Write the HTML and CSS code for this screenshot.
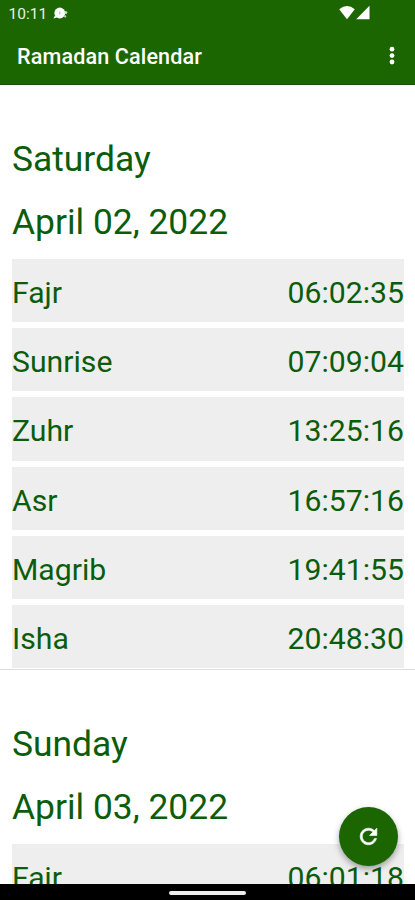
FILE: index.html
```html
<!DOCTYPE html>
<html lang="en">
<head>
<meta charset="utf-8">
<title>Ramadan Calendar</title>
<link rel="stylesheet" href="styles.css">
</head>
<body>
<div class="screen">
  <header class="header">
    <div class="status">
      <span class="clock">10:11</span>
      <svg class="notice" width="16" height="14" viewBox="0 0 16 14"><circle cx="6.8" cy="6" r="5.4" fill="#fff"/><path d="M.4 11.6l1.6-3 2 2z" fill="#fff"/><circle cx="12.8" cy="5.6" r="1.5" fill="#c8dcc2"/><circle cx="12.2" cy="9.4" r="1.1" fill="#c8dcc2"/><path d="M6.8 4.4v3" stroke="#a9c4a0" stroke-width="1.2"/></svg>
      <svg class="signal" width="32" height="16" viewBox="0 0 32 16"><path d="M.2 4.2Q8 -2.2 15.8 4.2L8 14.2z" fill="#fff"/><path d="M30.5 .8V14.2H17.2z" fill="#fff"/></svg>
    </div>
    <div class="toolbar">
      <h1 class="title">Ramadan Calendar</h1>
      <svg class="more" width="6" height="20" viewBox="0 0 6 20"><g fill="#fff"><circle cx="3" cy="3.2" r="2.4"/><circle cx="3" cy="9.6" r="2.4"/><circle cx="3" cy="16" r="2.4"/></g></svg>
    </div>
  </header>
  <main class="list">
    <section class="day">
      <h2 class="heading">Saturday</h2>
      <p class="heading">April 02, 2022</p>
      <ul class="times">
        <li class="row"><span>Fajr</span><span>06:02:35</span></li>
        <li class="row"><span>Sunrise</span><span>07:09:04</span></li>
        <li class="row"><span>Zuhr</span><span>13:25:16</span></li>
        <li class="row"><span>Asr</span><span>16:57:16</span></li>
        <li class="row"><span>Magrib</span><span>19:41:55</span></li>
        <li class="row"><span>Isha</span><span>20:48:30</span></li>
      </ul>
    </section>
    <section class="day">
      <h2 class="heading">Sunday</h2>
      <p class="heading">April 03, 2022</p>
      <ul class="times">
        <li class="row"><span>Fajr</span><span>06:01:18</span></li>
      </ul>
    </section>
  </main>
  <button class="fab" aria-label="Refresh"><svg width="25" height="25" viewBox="0 0 24 24"><path d="M17.65 6.35A7.96 7.96 0 0 0 12 4a8 8 0 1 0 7.73 10h-2.08A6 6 0 1 1 12 6c1.66 0 3.14.69 4.22 1.78L13 11h7V4z" fill="#fff" stroke="#fff" stroke-width=".6"/></svg></button>
  <footer class="nav"><span class="handle"></span></footer>
</div>
</body>
</html>
```

FILE: styles.css
```css
* { box-sizing: border-box; margin: 0; padding: 0; }
body { font-family: Roboto, sans-serif; background: #fff; }
.screen {
  position: relative;
  width: 415px;
  height: 900px;
  display: flex;
  flex-direction: column;
  overflow: hidden;
}
.header {
  flex: none;
  height: 85px;
  background: #1b6600;
  border-bottom: 1px solid #14510a;
  color: #fff;
}
.status { display: flex; align-items: center; height: 28px; padding: 0 44px 0 8.5px; }
.clock { font-size: 15.5px; line-height: 28px; color: #e8f0e5; }
.notice { margin-left: 6px; }
.signal { margin: 0 0 2px auto; }
.toolbar {
  display: flex;
  align-items: center;
  justify-content: space-between;
  height: 56px;
  padding: 0 20px 0 17px;
}
.title { padding-top: 2px; font-size: 21.6px; font-weight: 550; letter-spacing: .12px; line-height: 56px; }
.list { flex: 1; min-height: 0; overflow: hidden; }
.day { height: 585px; padding: 42px 11px 0 12px; border-bottom: 1px solid #ddd; }
.heading { height: 63px; font-size: 35.4px; font-weight: 400; line-height: 64px; color: #0b5c0b; }
.times { list-style: none; display: grid; gap: 6px; padding-top: 6px; }
.row {
  display: flex;
  justify-content: space-between;
  height: 63.2px;
  background: #eee;
  color: #0b5c0b;
  font-size: 30.2px;
  line-height: 67.6px;
}
.fab {
  position: absolute;
  left: 339px;
  top: 807px;
  width: 59px;
  height: 59px;
  display: grid;
  place-items: center;
  border: 0;
  border-radius: 50%;
  background: #1b6600;
  box-shadow: 0 3px 6px rgba(0, 0, 0, .35);
}
.nav {
  flex: none;
  height: 16px;
  display: flex;
  justify-content: center;
  padding-top: 7px;
  background: #000;
}
.handle { width: 77px; height: 4px; border-radius: 2px; background: #eee; }
```
